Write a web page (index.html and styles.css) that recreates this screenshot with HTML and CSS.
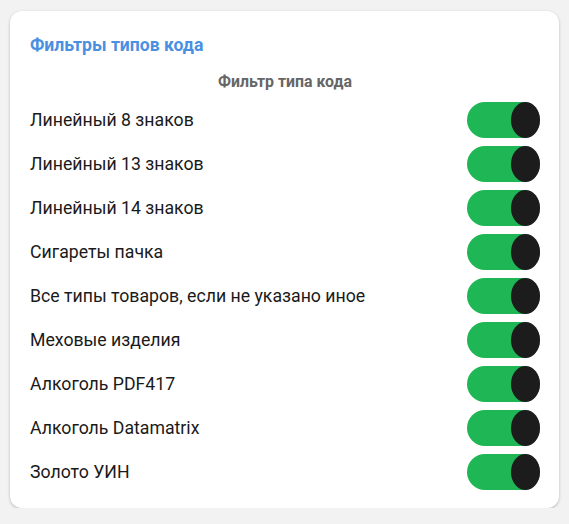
FILE: index.html
```html
<!DOCTYPE html>
<html lang="ru">
<head>
<meta charset="utf-8">
<link rel="stylesheet" href="styles.css">
</head>
<body>
<div class="card">
  <h2 class="title">Фильтры типов кода</h2>
  <div class="subtitle">Фильтр типа кода</div>
  <div class="list">
    <div class="row"><span class="label">Линейный 8 знаков</span><span class="toggle"><span class="knob"></span></span></div>
    <div class="row"><span class="label">Линейный 13 знаков</span><span class="toggle"><span class="knob"></span></span></div>
    <div class="row"><span class="label">Линейный 14 знаков</span><span class="toggle"><span class="knob"></span></span></div>
    <div class="row"><span class="label">Сигареты пачка</span><span class="toggle"><span class="knob"></span></span></div>
    <div class="row"><span class="label">Все типы товаров, если не указано иное</span><span class="toggle"><span class="knob"></span></span></div>
    <div class="row"><span class="label">Меховые изделия</span><span class="toggle"><span class="knob"></span></span></div>
    <div class="row"><span class="label">Алкоголь PDF417</span><span class="toggle"><span class="knob"></span></span></div>
    <div class="row"><span class="label">Алкоголь Datamatrix</span><span class="toggle"><span class="knob"></span></span></div>
    <div class="row"><span class="label">Золото УИН</span><span class="toggle"><span class="knob"></span></span></div>
  </div>
</div>
</body>
</html>
```
FILE: styles.css
```css
html, body {
  margin: 0;
  padding: 0;
  background: #f2f2f2;
}
body {
  padding: 11px 10px 0 10px;
  font-family: Roboto, "Liberation Sans", sans-serif;
}
.card {
  background: #fff;
  border-radius: 12px;
  box-shadow: 0 1px 3px rgba(0,0,0,0.25);
  padding: 23px 19px 18px 20px;
  height: 497px;
  box-sizing: border-box;
}
.title {
  margin: 0;
  font-size: 17.6px;
  font-weight: 700;
  color: #4a90e2;
  line-height: 22px;
}
.subtitle {
  text-align: center;
  font-size: 15.9px;
  font-weight: 700;
  color: #666;
  margin-top: 16px;
  line-height: 20px;
}
.list {
  display: flex;
  flex-direction: column;
  gap: 8px;
  margin-top: 10px;
}
.row {
  display: flex;
  align-items: center;
  justify-content: space-between;
  height: 36px;
}
.label {
  font-size: 17.7px;
  color: #1a1a1a;
}
.toggle {
  width: 73px;
  height: 36px;
  background: #1fb655;
  border-radius: 18px;
  display: flex;
  justify-content: flex-end;
}
.knob {
  width: 29px;
  height: 36px;
  background: #1c1c1c;
  border-radius: 50%;
}
```
